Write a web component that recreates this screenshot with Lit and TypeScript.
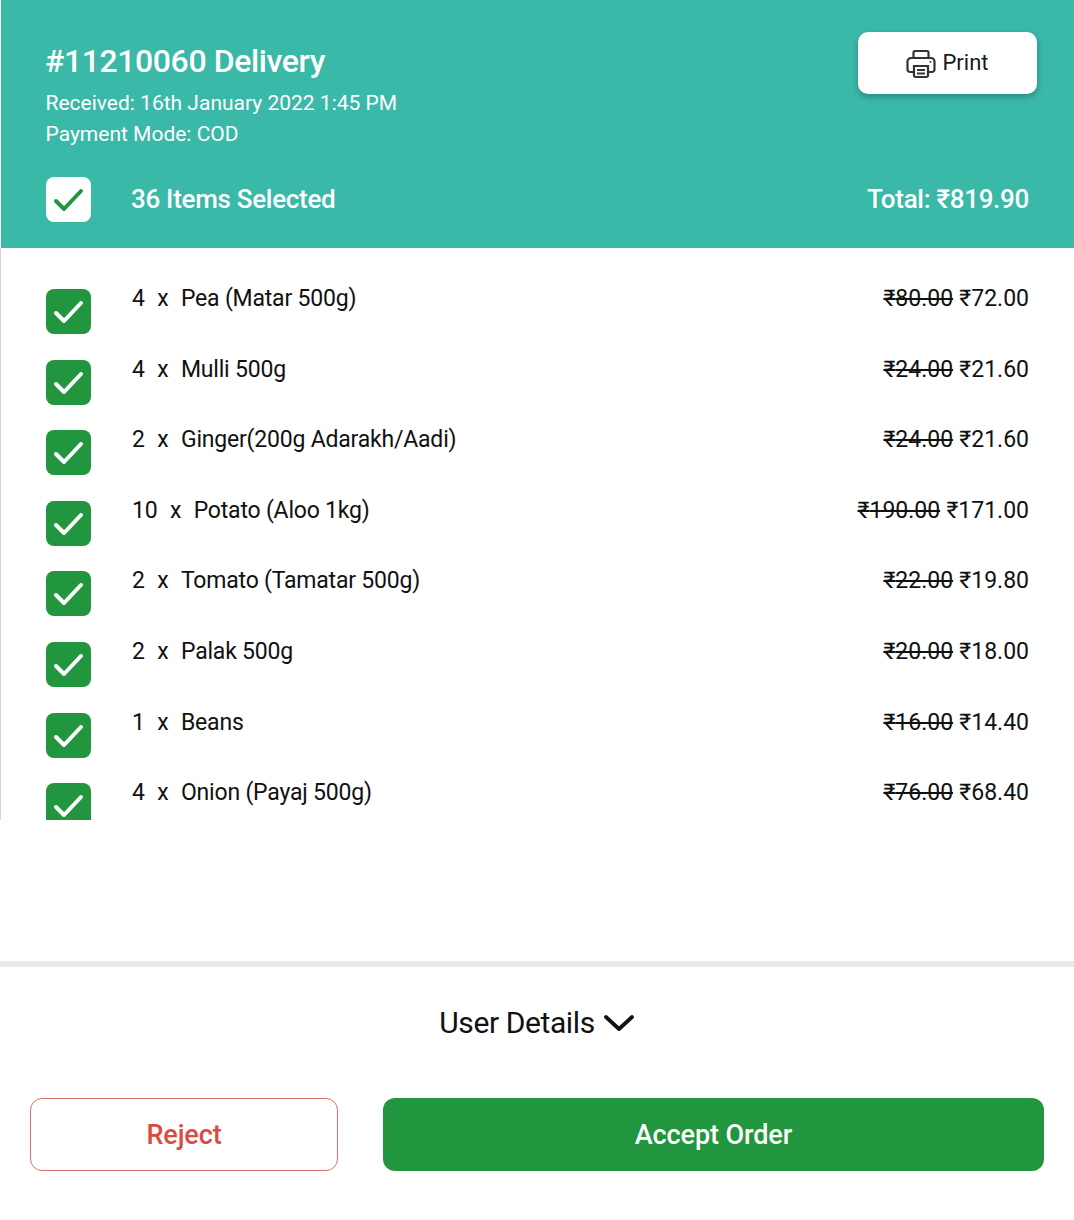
import { LitElement, html, css, svg } from 'lit';
import { customElement, state } from 'lit/decorators.js';

interface OrderItem {
  qty: number;
  name: string;
  mrp: string;
  price: string;
}

const ITEMS: OrderItem[] = [
  { qty: 4, name: 'Pea (Matar 500g)', mrp: '80.00', price: '72.00' },
  { qty: 4, name: 'Mulli 500g', mrp: '24.00', price: '21.60' },
  { qty: 2, name: 'Ginger(200g Adarakh/Aadi)', mrp: '24.00', price: '21.60' },
  { qty: 10, name: 'Potato (Aloo 1kg)', mrp: '190.00', price: '171.00' },
  { qty: 2, name: 'Tomato (Tamatar 500g)', mrp: '22.00', price: '19.80' },
  { qty: 2, name: 'Palak 500g', mrp: '20.00', price: '18.00' },
  { qty: 1, name: 'Beans', mrp: '16.00', price: '14.40' },
  { qty: 4, name: 'Onion (Payaj 500g)', mrp: '76.00', price: '68.40' },
];

const tick = svg`<path d="M10 24l8 8L35 14" fill="none" stroke="currentColor" stroke-width="4" stroke-linecap="round" stroke-linejoin="round" />`;

@customElement('app-root')
export class AppRoot extends LitElement {
  @state() items = ITEMS;

  static styles = css`
    :host {
      display: block;
      height: 1220px;
      background: #fff;
      font-family: Roboto, 'Noto Sans', sans-serif;
      color: #111;
      overflow: hidden;
    }

    .header {
      box-sizing: border-box;
      height: 248px;
      margin-left: 1px;
      padding: 32px 45px 0 45px;
      background: #3ab8a8;
      color: #fff;
    }

    .head-top {
      display: flex;
      justify-content: space-between;
      align-items: flex-start;
      height: 145px;
    }

    h1 {
      margin: 0 0 -2px -1px;
      font-size: 32px;
      line-height: 58px;
      font-weight: 500;
      letter-spacing: -0.4px;
    }

    .meta {
      margin: 0 0 0 -0.5px;
      font-size: 21px;
      line-height: 31px;
    }

    .print {
      display: flex;
      align-items: center;
      justify-content: center;
      gap: 6px;
      box-sizing: border-box;
      width: 179px;
      height: 62px;
      margin-right: -8px;
      padding: 0;
      border: none;
      border-radius: 10px;
      background: #fff;
      color: #1a1a1a;
      font: inherit;
      font-size: 22px;
      box-shadow: 0 3px 6px rgba(0, 0, 0, 0.25);
    }

    .print svg {
      width: 30px;
      height: 30px;
      margin-top: 2px;
    }

    .print span {
      margin-bottom: 2px;
    }

    .summary {
      display: flex;
      align-items: center;
      font-size: 26px;
      font-weight: 500;
      letter-spacing: -0.3px;
    }

    .box {
      flex: none;
      width: 45px;
      height: 45px;
      border-radius: 8px;
      background: #22963f;
      color: #fff;
    }

    .box svg {
      display: block;
      width: 45px;
      height: 45px;
    }

    .box.light {
      background: #fff;
      color: #22963f;
    }

    .summary .label {
      flex: 1;
      margin-left: 40px;
      padding-bottom: 2px;
    }

    .summary .total {
      padding-bottom: 2px;
    }

    .list {
      box-sizing: border-box;
      height: 572px;
      padding: 33px 45px 0 45px;
      border-left: 1px solid #d6d6d6;
      overflow: hidden;
    }

    .row {
      display: flex;
      align-items: flex-start;
      height: 70.6px;
      font-size: 23px;
      line-height: 36px;
    }

    .row .box {
      margin-top: 8px;
    }

    .name {
      display: flex;
      flex: 1;
      gap: 12.5px;
      margin-left: 41px;
      letter-spacing: -0.2px;
    }

    .mrp {
      text-decoration: line-through;
    }

    .price {
      margin-left: 0.5px;
    }

    .gap {
      height: 141px;
    }

    .rule {
      height: 6px;
      background: #e8e8e8;
    }

    .details {
      display: flex;
      align-items: center;
      justify-content: center;
      gap: 8px;
      height: 110px;
      font-size: 30px;
      letter-spacing: -0.4px;
      color: #111;
    }

    .details svg {
      width: 32px;
      height: 20px;
      margin-top: 2px;
    }

    .actions {
      display: flex;
      gap: 45px;
      padding: 21px 30px 0;
    }

    .actions button {
      height: 73px;
      border-radius: 12px;
      font: inherit;
      font-size: 27px;
      font-weight: 500;
      letter-spacing: -0.1px;
    }

    .reject {
      width: 308px;
      background: #fff;
      border: 1.5px solid #d96f69;
      color: #dc4b41;
    }

    .accept {
      flex: 1;
      background: #22963f;
      border: none;
      color: #fff;
    }
  `;

  private renderPrinter() {
    return html`<svg viewBox="0 0 30 30" fill="none" stroke="#333" stroke-width="2.2">
      <path d="M7.5 9V3.5a1.5 1.5 0 0 1 1.5-1.5h12a1.5 1.5 0 0 1 1.5 1.5V9" />
      <path d="M7.5 23H4a2.5 2.5 0 0 1-2.5-2.5v-8A3.5 3.5 0 0 1 5 9h20a3.5 3.5 0 0 1 3.5 3.5v8A2.5 2.5 0 0 1 26 23h-3.5" />
      <path d="M8 17h14v9.5a1.5 1.5 0 0 1-1.5 1.5h-11A1.5 1.5 0 0 1 8 26.5z" />
      <path d="M11 21h8M11 24.5h8" />
      <circle cx="24.5" cy="13" r="0.9" fill="#333" stroke="none" />
    </svg>`;
  }

  render() {
    return html`
      <section class="header">
        <div class="head-top">
          <div>
            <h1>#11210060 Delivery</h1>
            <p class="meta">Received: 16th January 2022 1:45 PM</p>
            <p class="meta">Payment Mode: COD</p>
          </div>
          <button class="print">${this.renderPrinter()}<span>Print</span></button>
        </div>
        <div class="summary">
          <span class="box light"><svg viewBox="0 0 45 45">${tick}</svg></span>
          <span class="label">36 Items Selected</span>
          <span class="total">Total: ₹819.90</span>
        </div>
      </section>

      <section class="list">
        ${this.items.map(
          (item) => html`
            <div class="row">
              <span class="box"><svg viewBox="0 0 45 45">${tick}</svg></span>
              <span class="name">
                <span>${item.qty}</span>
                <span>x</span>
                <span>${item.name}</span>
              </span>
              <span><span class="mrp">₹${item.mrp}</span> <span class="price">₹${item.price}</span></span>
            </div>
          `,
        )}
      </section>

      <div class="gap"></div>
      <div class="rule"></div>

      <div class="details">
        <span>User Details</span>
        <svg viewBox="0 0 32 20" fill="none" stroke="#111" stroke-width="3.8" stroke-linecap="round" stroke-linejoin="round">
          <path d="M3 4l13 12L29 4" />
        </svg>
      </div>

      <div class="actions">
        <button class="reject">Reject</button>
        <button class="accept">Accept Order</button>
      </div>
    `;
  }
}
